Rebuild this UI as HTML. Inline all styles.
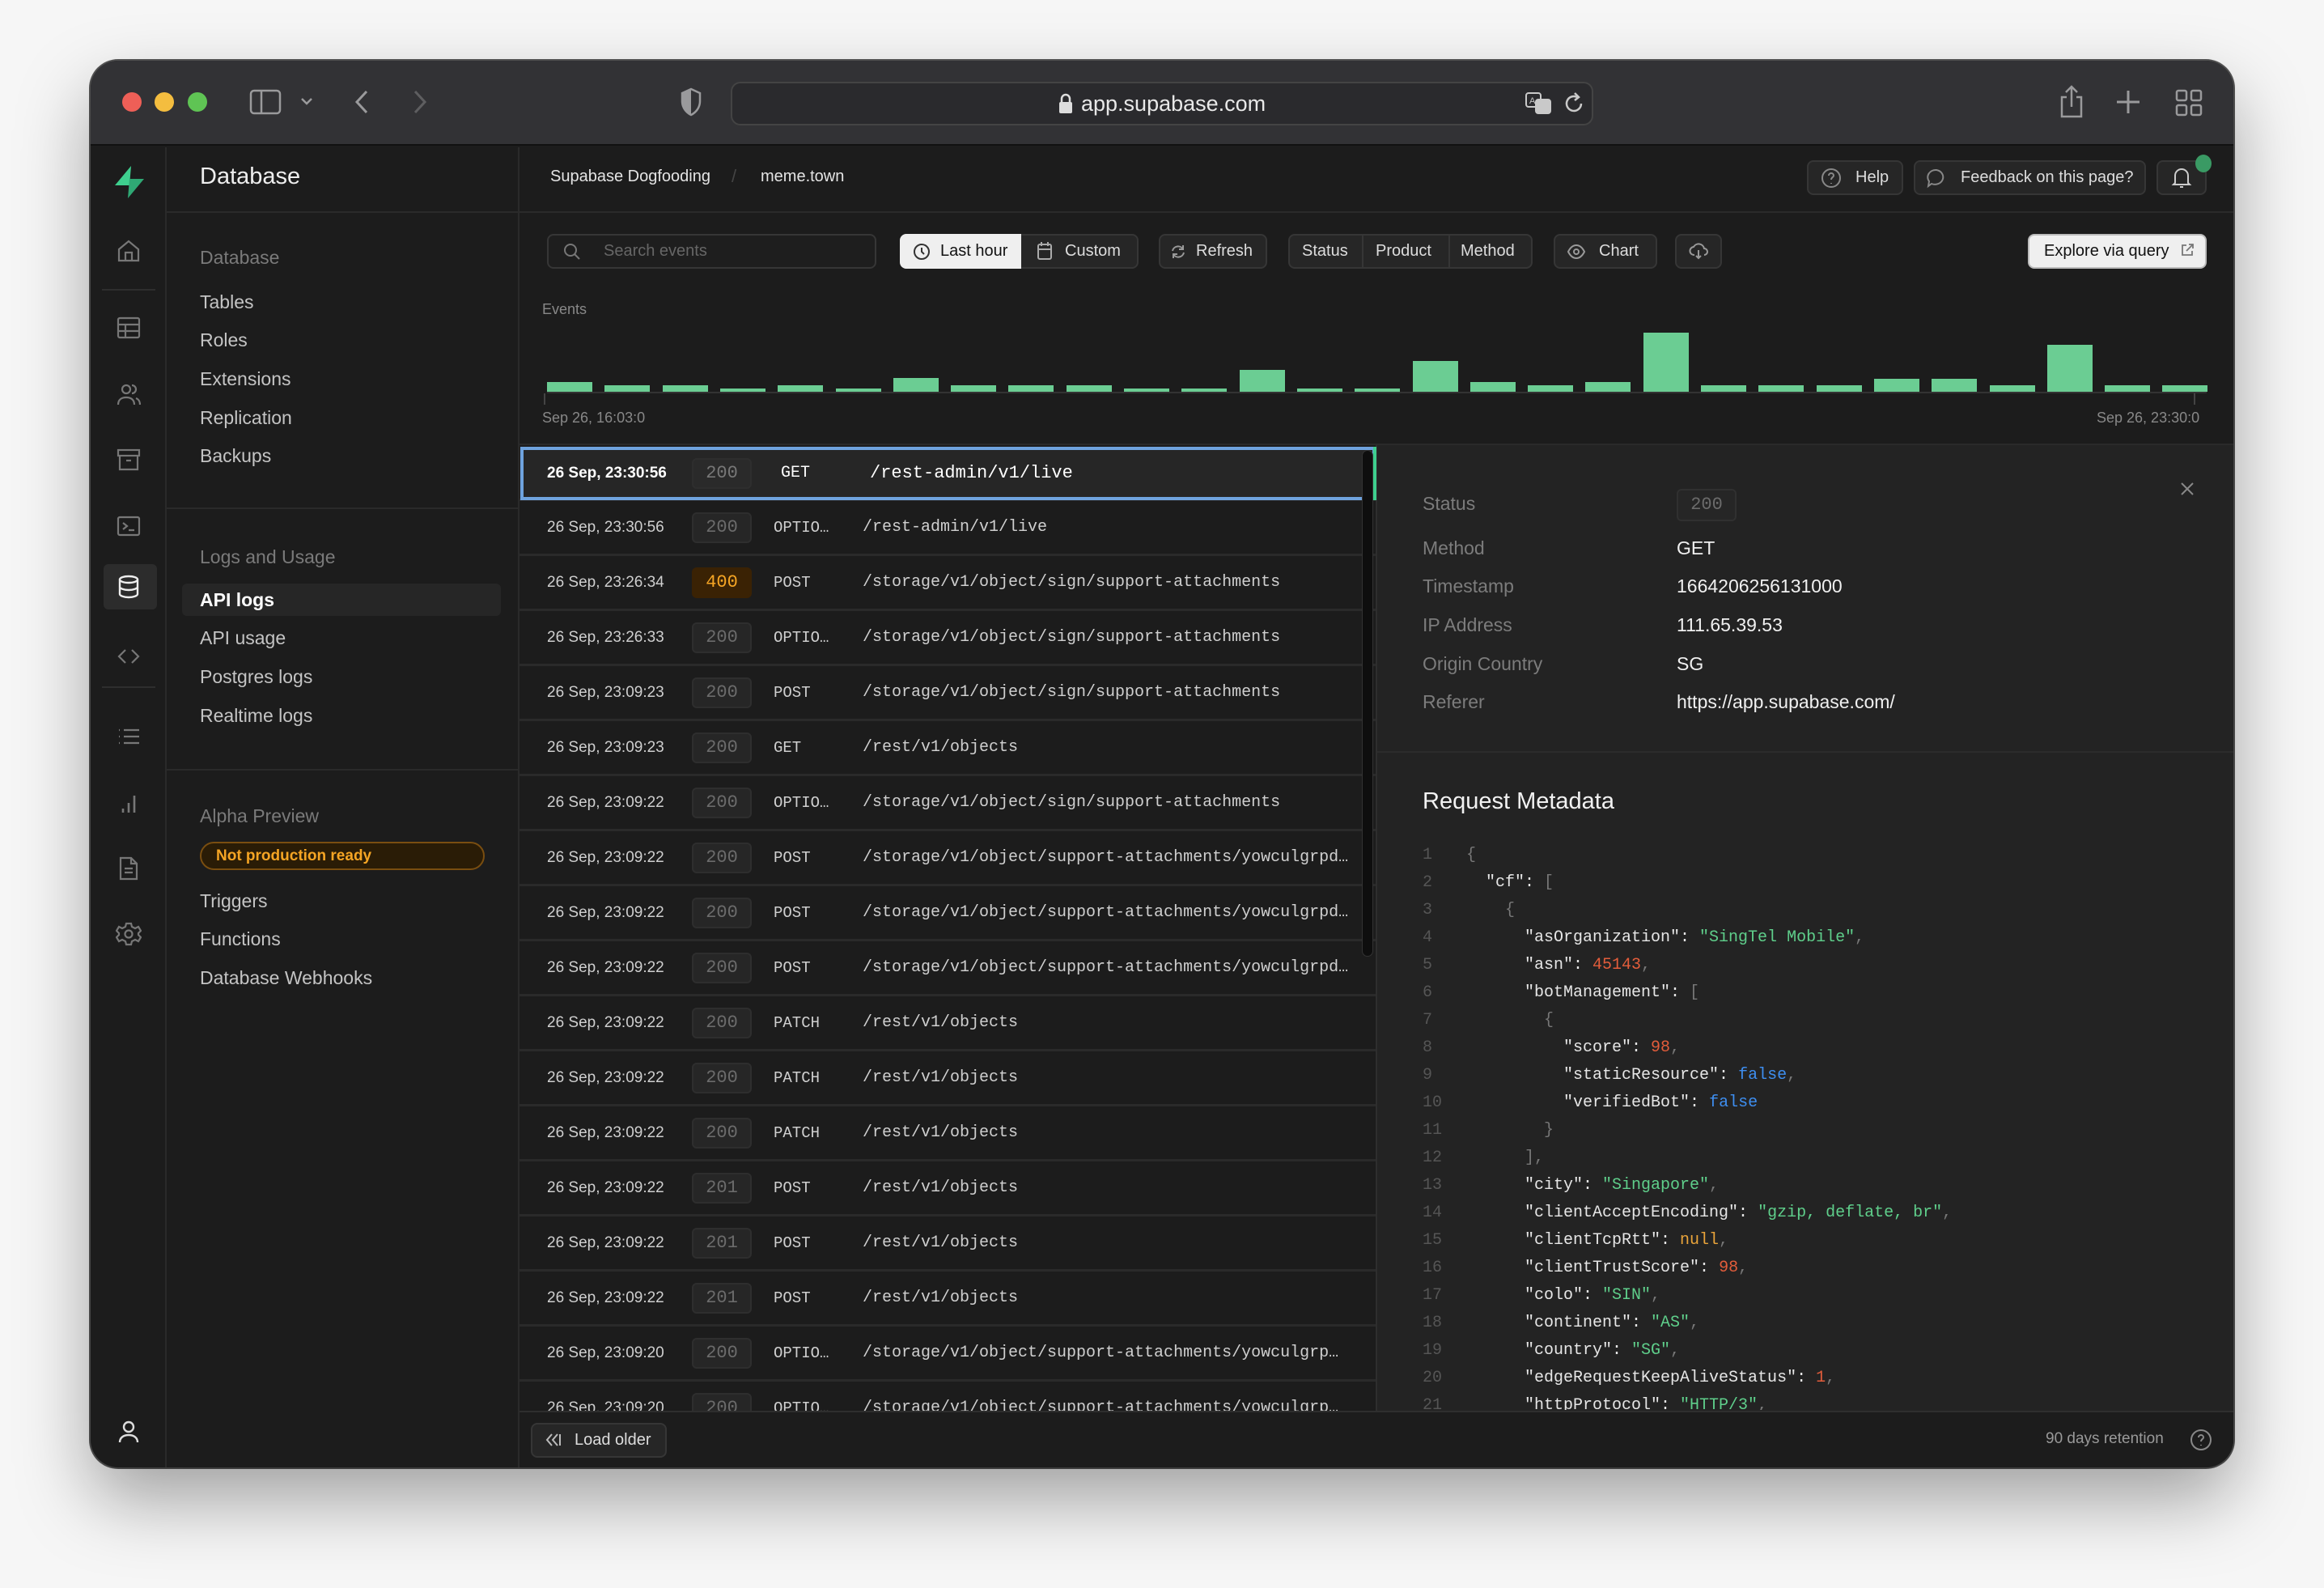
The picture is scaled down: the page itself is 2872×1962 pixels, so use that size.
<!DOCTYPE html>
<html><head><meta charset="utf-8"><style>
*{margin:0;padding:0;box-sizing:border-box}
body{width:2872px;height:1962px;background:#f6f6f6;position:relative;overflow:hidden;font-family:"Liberation Sans",sans-serif}
.a{position:absolute;white-space:nowrap}
.win{position:absolute;left:112px;top:75px;width:2648px;height:1738px;border-radius:34px;background:#1c1c1c;overflow:hidden;box-shadow:0 40px 90px rgba(0,0,0,.35),0 0 0 2px #555}
.mono{font-family:"Liberation Mono",monospace}
.btn{position:absolute;height:43px;border:2px solid #363636;background:#262626;border-radius:8px;color:#ddd;font-size:20px;line-height:39px}
.side{font-size:23px;color:#c4c4c4}
.lab{font-size:23px;color:#7a7a7a}
.row{position:absolute;left:641px;width:1059px;height:68px;border-bottom:3px solid #2a2a2a}
.ts{position:absolute;left:35px;top:0;line-height:66px;font-size:19px;color:#cfcfcf}
.st{position:absolute;left:214px;top:14px;width:74px;height:38px;background:#262626;border:2px solid #2e2e2e;border-radius:6px;color:#6b6b6b;font-family:"Liberation Mono",monospace;font-size:22px;line-height:34px;text-align:center}
.me{position:absolute;left:315px;top:0;line-height:66px;font-family:"Liberation Mono",monospace;font-size:19px;color:#cfcfcf}
.pa{position:absolute;left:425px;top:0;line-height:66px;font-family:"Liberation Mono",monospace;font-size:20px;color:#cfcfcf}
.dl{position:absolute;left:1758px;font-size:23px;color:#7c7c7c}
.dv{position:absolute;left:2072px;font-size:23px;color:#f0f0f0}
.cl{position:absolute;left:1758px;height:34px;line-height:34px;font-family:"Liberation Mono",monospace;font-size:20px;color:#e6e6e6;white-space:pre}
.cl i{font-style:normal;color:#555;display:inline-block;width:54px}
.s{color:#5fcf8b}.n{color:#e35d3b}.b{color:#3e8ef0}.u{color:#e8a33a}.p{color:#777}
svg{position:absolute}
</style></head><body>
<div class="win">
<div class="a" style="left:0;top:0;width:2648px;height:105px;background:#323235;border-bottom:2px solid #111"></div>
<!-- detail panel bg -->
<div class="a" style="left:1588px;top:475px;width:1060px;height:1194px;background:#232323;border-left:2px solid #2e2e2e"></div>
<!-- footer -->
<div class="a" style="left:529px;top:1668px;width:2119px;height:70px;background:#1c1c1c;border-top:2px solid #2e2e2e"></div>
</div>
<div class="a" style="left:151px;top:114px;width:24px;height:24px;border-radius:50%;background:#ee5f57"></div>
<div class="a" style="left:191px;top:114px;width:24px;height:24px;border-radius:50%;background:#f4bd3f"></div>
<div class="a" style="left:232px;top:114px;width:24px;height:24px;border-radius:50%;background:#5fc454"></div>
<svg style="left:308px;top:110px" width="40" height="32" viewBox="0 0 40 32" fill="none" stroke="#9a9a9c" stroke-width="2.5"><rect x="2" y="2" width="36" height="28" rx="4"/><line x1="15" y1="2" x2="15" y2="30"/></svg>
<svg style="left:370px;top:118px" width="18" height="14" viewBox="0 0 18 14" fill="none" stroke="#9a9a9c" stroke-width="2.5"><path d="M3 4l6 6 6-6"/></svg>
<svg style="left:436px;top:110px" width="22" height="32" viewBox="0 0 22 32" fill="none" stroke="#9a9a9c" stroke-width="3"><path d="M17 3L5 16l12 13"/></svg>
<svg style="left:508px;top:110px" width="22" height="32" viewBox="0 0 22 32" fill="none" stroke="#5e5e60" stroke-width="3"><path d="M5 3l12 13L5 29"/></svg>
<svg style="left:840px;top:108px" width="28" height="36" viewBox="0 0 28 36"><path d="M14 2L3 7v10c0 8 5 14 11 17 6-3 11-9 11-17V7z" fill="none" stroke="#9a9a9c" stroke-width="2.5"/><path d="M14 2L3 7v10c0 8 5 14 11 17z" fill="#9a9a9c"/></svg>
<div class="a" style="left:903px;top:101px;width:1066px;height:54px;border-radius:12px;background:#2a2a2d;border:2px solid #444"></div>
<svg style="left:1308px;top:115px" width="18" height="26" viewBox="0 0 18 26"><path d="M4 11V7a5 5 0 0110 0v4" fill="none" stroke="#ddd" stroke-width="2.5"/><rect x="1" y="11" width="16" height="14" rx="2" fill="#ddd"/></svg>
<div class="a" style="left:1336px;top:110px;font-size:27px;color:#e8e8e8;line-height:36px">app.supabase.com</div>
<svg style="left:1884px;top:113px" width="36" height="30" viewBox="0 0 36 30" fill="none" stroke="#c9c9c9" stroke-width="2"><rect x="2" y="2" width="18" height="17" rx="3"/><rect x="14" y="10" width="18" height="17" rx="3" fill="#c9c9c9"/><text x="6" y="15" font-size="11" fill="#c9c9c9" stroke="none" font-family="Liberation Sans">A</text></svg>
<svg style="left:1932px;top:112px" width="28" height="32" viewBox="0 0 28 32" fill="none" stroke="#c9c9c9" stroke-width="2.5"><path d="M22 16a9 9 0 11-4-7.5"/><path d="M14 3l5 5-5 4"/></svg>
<svg style="left:2544px;top:104px" width="32" height="42" viewBox="0 0 32 42" fill="none" stroke="#9a9a9c" stroke-width="2.5"><path d="M10 16H4v24h24V16h-6"/><path d="M16 28V3M9 10l7-7 7 7"/></svg>
<svg style="left:2614px;top:110px" width="32" height="32" viewBox="0 0 32 32" stroke="#9a9a9c" stroke-width="3"><path d="M16 2v28M2 16h28"/></svg>
<svg style="left:2688px;top:110px" width="34" height="34" viewBox="0 0 34 34" fill="none" stroke="#9a9a9c" stroke-width="2.5"><rect x="2" y="2" width="12" height="12" rx="2"/><rect x="20" y="2" width="12" height="12" rx="2"/><rect x="2" y="20" width="12" height="12" rx="2"/><rect x="20" y="20" width="12" height="12" rx="2"/></svg>

<div class="a" style="left:204px;top:182px;width:2px;height:1631px;background:#2a2a2a"></div>
<div class="a" style="left:640px;top:182px;width:2px;height:1631px;background:#2a2a2a"></div>
<div class="a" style="left:206px;top:261px;width:2554px;height:2px;background:#2a2a2a"></div>
<svg style="left:138px;top:203px" width="44" height="44" viewBox="0 0 44 44"><path d="M24 2L4 26h18z" fill="#3ecf8e"/><path d="M20 42l20-24H22z" fill="#2fa874"/></svg>
<svg style="left:144px;top:295px" width="30" height="30" viewBox="0 0 30 30" fill="none" stroke="#777" stroke-width="2.2"><path d="M3 13L15 3l12 10v14H3z"/><path d="M11 27V17h8v10"/></svg>
<div class="a" style="left:126px;top:357px;width:66px;height:2px;background:#2e2e2e"></div>
<svg style="left:144px;top:390px" width="30" height="30" viewBox="0 0 30 30" fill="none" stroke="#777" stroke-width="2.2"><rect x="2" y="3" width="26" height="24" rx="2"/><path d="M2 11h26M2 19h26M11 11v16"/></svg>
<svg style="left:144px;top:472px" width="30" height="30" viewBox="0 0 30 30" fill="none" stroke="#777" stroke-width="2.2"><circle cx="12" cy="9" r="5"/><path d="M2 28c0-6 4-9 10-9s10 3 10 9"/><path d="M19 4a5 5 0 010 10M24 20c3 1 5 4 5 8"/></svg>
<svg style="left:144px;top:553px" width="30" height="30" viewBox="0 0 30 30" fill="none" stroke="#777" stroke-width="2.2"><rect x="2" y="3" width="26" height="7"/><path d="M4 10v17h22V10M12 16h6"/></svg>
<svg style="left:144px;top:635px" width="30" height="30" viewBox="0 0 30 30" fill="none" stroke="#777" stroke-width="2.2"><rect x="2" y="4" width="26" height="22" rx="2"/><path d="M8 11l5 4-5 4M15 20h7"/></svg>
<div class="a" style="left:128px;top:697px;width:66px;height:56px;border-radius:6px;background:#2c2c2c"></div>
<svg style="left:144px;top:710px" width="30" height="30" viewBox="0 0 30 30" fill="none" stroke="#eee" stroke-width="2.4"><ellipse cx="15" cy="6" rx="11" ry="4"/><path d="M4 6v18c0 2 5 4 11 4s11-2 11-4V6M4 15c0 2 5 4 11 4s11-2 11-4"/></svg>
<svg style="left:144px;top:796px" width="30" height="30" viewBox="0 0 30 30" fill="none" stroke="#777" stroke-width="2.2"><path d="M11 7l-8 8 8 8M19 7l8 8-8 8"/></svg>
<div class="a" style="left:126px;top:848px;width:66px;height:2px;background:#2e2e2e"></div>
<svg style="left:144px;top:895px" width="30" height="30" viewBox="0 0 30 30" fill="none" stroke="#777" stroke-width="2.2"><path d="M9 7h19M9 15h19M9 23h19M3 7h1M3 15h1M3 23h1"/></svg>
<svg style="left:144px;top:978px" width="30" height="30" viewBox="0 0 30 30" fill="none" stroke="#777" stroke-width="2.6"><path d="M8 26v-5M15 26V14M22 26V5"/></svg>
<svg style="left:144px;top:1058px" width="30" height="30" viewBox="0 0 30 30" fill="none" stroke="#777" stroke-width="2.2"><path d="M5 2h13l7 7v19H5z"/><path d="M18 2v7h7M10 15h10M10 20h10"/></svg>
<svg style="left:143px;top:1138px" width="32" height="32" viewBox="0 0 32 32" fill="none" stroke="#777" stroke-width="2.2"><circle cx="16" cy="16" r="4.5"/><path d="M13 3h6l1 4 4 2 4-2 3 5-3 3v2l3 3-3 5-4-2-4 2-1 4h-6l-1-4-4-2-4 2-3-5 3-3v-2L1 12l3-5 4 2 4-2z"/></svg>
<svg style="left:144px;top:1754px" width="30" height="30" viewBox="0 0 30 30" fill="none" stroke="#ddd" stroke-width="2.4"><circle cx="15" cy="9" r="6"/><path d="M4 28c0-6 5-9 11-9s11 3 11 9"/></svg>

<div class="a" style="left:247px;top:202px;font-size:29px;color:#eee">Database</div>
<div class="a lab" style="left:247px;top:305px">Database</div>
<div class="a side" style="left:247px;top:360px">Tables</div>
<div class="a side" style="left:247px;top:407px">Roles</div>
<div class="a side" style="left:247px;top:455px">Extensions</div>
<div class="a side" style="left:247px;top:503px">Replication</div>
<div class="a side" style="left:247px;top:550px">Backups</div>
<div class="a" style="left:206px;top:627px;width:434px;height:2px;background:#2a2a2a"></div>
<div class="a lab" style="left:247px;top:675px">Logs and Usage</div>
<div class="a" style="left:225px;top:721px;width:394px;height:40px;border-radius:6px;background:#262626"></div>
<div class="a side" style="left:247px;top:728px;color:#fff;font-weight:bold">API logs</div>
<div class="a side" style="left:247px;top:775px">API usage</div>
<div class="a side" style="left:247px;top:823px">Postgres logs</div>
<div class="a side" style="left:247px;top:871px">Realtime logs</div>
<div class="a" style="left:206px;top:950px;width:434px;height:2px;background:#2a2a2a"></div>
<div class="a lab" style="left:247px;top:995px">Alpha Preview</div>
<div class="a" style="left:247px;top:1040px;width:352px;height:35px;border-radius:18px;background:#2a1c06;border:2px solid #7a4e10;color:#f5a524;font-size:19px;font-weight:bold;line-height:31px;padding-left:18px">Not production ready</div>
<div class="a side" style="left:247px;top:1100px">Triggers</div>
<div class="a side" style="left:247px;top:1147px">Functions</div>
<div class="a side" style="left:247px;top:1195px">Database Webhooks</div>

<div class="a" style="left:680px;top:207px;font-size:20px;color:#e4e4e4">Supabase Dogfooding</div>
<div class="a" style="left:904px;top:205px;font-size:22px;color:#444">/</div>
<div class="a" style="left:940px;top:207px;font-size:20px;color:#e4e4e4">meme.town</div>
<div class="btn" style="left:2233px;top:198px;width:119px;padding-left:58px">Help</div>
<svg style="left:2250px;top:207px" width="26" height="26" viewBox="0 0 26 26" fill="none" stroke="#888" stroke-width="2"><circle cx="13" cy="13" r="11"/><path d="M10 10a3 3 0 116 0c0 2-3 2-3 5M13 19v1"/></svg>
<div class="btn" style="left:2365px;top:198px;width:287px;padding-left:56px">Feedback on this page?</div>
<svg style="left:2380px;top:207px" width="26" height="26" viewBox="0 0 26 26" fill="none" stroke="#888" stroke-width="2"><path d="M13 3a10 9 0 11-6 17l-4 3 1-6A10 9 0 0113 3z"/></svg>
<div class="btn" style="left:2665px;top:198px;width:62px"></div>
<svg style="left:2683px;top:206px" width="26" height="28" viewBox="0 0 26 28" fill="none" stroke="#ccc" stroke-width="2"><path d="M5 20V11a8 8 0 0116 0v9l2 2H3zM11 25h4"/></svg>
<div class="a" style="left:2713px;top:191px;width:20px;height:22px;border-radius:50%;background:#3a9a64"></div>

<div class="a" style="left:676px;top:289px;width:407px;height:43px;border:2px solid #363636;border-radius:8px;background:#1e1e1e"></div>
<svg style="left:696px;top:300px" width="22" height="22" viewBox="0 0 22 22" fill="none" stroke="#777" stroke-width="2"><circle cx="9" cy="9" r="7"/><path d="M14 14l6 6"/></svg>
<div class="a" style="left:746px;top:299px;font-size:20px;color:#666">Search events</div>
<div class="a" style="left:1112px;top:289px;width:295px;height:43px;border:2px solid #363636;border-radius:8px;background:#262626"></div>
<div class="a" style="left:1112px;top:289px;width:150px;height:43px;border-radius:8px 0 0 8px;background:#efefef"></div>
<svg style="left:1128px;top:300px" width="22" height="22" viewBox="0 0 22 22" fill="none" stroke="#333" stroke-width="2"><circle cx="11" cy="11" r="9"/><path d="M11 6v5l3 3"/></svg>
<div class="a" style="left:1162px;top:299px;font-size:20px;color:#111">Last hour</div>
<svg style="left:1280px;top:298px" width="22" height="24" viewBox="0 0 22 24" fill="none" stroke="#aaa" stroke-width="2"><rect x="3" y="4" width="16" height="18" rx="2"/><path d="M3 10h16M7 1v5M15 1v5"/></svg>
<div class="a" style="left:1316px;top:299px;font-size:20px;color:#ddd">Custom</div>
<div class="btn" style="left:1432px;top:289px;width:134px;padding-left:44px">Refresh</div>
<svg style="left:1446px;top:300px" width="20" height="22" viewBox="0 0 20 22" fill="none" stroke="#999" stroke-width="2"><path d="M16 8a7 7 0 00-13 2M4 14a7 7 0 0013-2M16 3v5h-5M4 19v-5h5"/></svg>
<div class="btn" style="left:1592px;top:289px;width:302px"></div>
<div class="a" style="left:1683px;top:291px;width:2px;height:39px;background:#363636"></div>
<div class="a" style="left:1790px;top:291px;width:2px;height:39px;background:#363636"></div>
<div class="a" style="left:1609px;top:299px;font-size:20px;color:#ddd">Status</div>
<div class="a" style="left:1700px;top:299px;font-size:20px;color:#ddd">Product</div>
<div class="a" style="left:1805px;top:299px;font-size:20px;color:#ddd">Method</div>
<div class="btn" style="left:1920px;top:289px;width:128px;padding-left:54px">Chart</div>
<svg style="left:1936px;top:300px" width="24" height="22" viewBox="0 0 24 22" fill="none" stroke="#999" stroke-width="2"><path d="M2 11C5 5 9 3 12 3s7 2 10 8c-3 6-7 8-10 8S5 17 2 11z"/><circle cx="12" cy="11" r="3"/></svg>
<div class="btn" style="left:2070px;top:289px;width:58px"></div>
<svg style="left:2087px;top:298px" width="24" height="24" viewBox="0 0 24 24" fill="none" stroke="#999" stroke-width="2"><path d="M7 17a5 5 0 01-1-10 7 7 0 0113 2 4 4 0 010 8M12 11v10M9 18l3 3 3-3"/></svg>
<div class="a" style="left:2506px;top:289px;width:221px;height:43px;border-radius:8px;background:#efefef;border:2px solid #bbb;font-size:20px;color:#111;line-height:39px;padding-left:18px">Explore via query</div>
<svg style="left:2694px;top:300px" width="18" height="18" viewBox="0 0 18 18" fill="none" stroke="#777" stroke-width="1.8"><path d="M8 3H3v12h12v-5M11 2h5v5M16 2l-8 8"/></svg>

<div class="a" style="left:670px;top:372px;font-size:18px;color:#888">Events</div>
<div class="a" style="left:676px;top:484px;width:2051px;height:2px;background:#333"></div>
<div id="bars"></div>
<div class="a" style="left:672px;top:486px;width:2px;height:14px;background:#444"></div>
<div class="a" style="left:2711px;top:486px;width:2px;height:14px;background:#444"></div>
<div class="a" style="left:670px;top:506px;font-size:18px;color:#888">Sep 26, 16:03:0</div>
<div class="a" style="left:2591px;top:506px;font-size:18px;color:#888">Sep 26, 23:30:0</div>
<div class="a" style="left:641px;top:548px;width:2119px;height:2px;background:#2a2a2a"></div>

<div id="rows"></div>
<div class="a" style="left:643px;top:552px;width:1057px;height:66px;border:4px solid #6fa3de;background:#262626"></div>
<div class="a" style="left:676px;top:552px;line-height:66px;font-size:19px;color:#fff;font-weight:bold">26 Sep, 23:30:56</div>
<div class="st" style="left:855px;top:566px;color:#777;background:#2a2a2a">200</div>
<div class="a mono" style="left:965px;top:552px;line-height:66px;font-size:20px;color:#fff">GET</div>
<div class="a mono" style="left:1075px;top:552px;line-height:66px;font-size:22px;color:#fff">/rest-admin/v1/live</div>
<div class="a" style="left:1683px;top:556px;width:14px;height:626px;background:#0e0e0e;border-radius:7px;border:1px solid #333"></div>
<div class="a" style="left:1697px;top:552px;width:4px;height:66px;background:#3ecf8e"></div>

<div class="dl" style="top:609px">Status</div>
<div class="a" style="left:2072px;top:604px;width:74px;height:40px;background:#262626;border:2px solid #303030;border-radius:6px;color:#6b6b6b;font-family:'Liberation Mono',monospace;font-size:22px;line-height:36px;text-align:center">200</div>
<div class="dl" style="top:664px">Method</div><div class="dv" style="top:664px">GET</div>
<div class="dl" style="top:711px">Timestamp</div><div class="dv" style="top:711px">1664206256131000</div>
<div class="dl" style="top:759px">IP Address</div><div class="dv" style="top:759px">111.65.39.53</div>
<div class="dl" style="top:807px">Origin Country</div><div class="dv" style="top:807px">SG</div>
<div class="dl" style="top:854px">Referer</div><div class="dv" style="top:854px">https://app.supabase.com/</div>
<svg style="left:2694px;top:595px" width="18" height="18" viewBox="0 0 18 18" stroke="#888" stroke-width="2"><path d="M2 2l14 14M16 2L2 16"/></svg>
<div class="a" style="left:1702px;top:928px;width:1058px;height:2px;background:#2c2c2c"></div>
<div class="a" style="left:1758px;top:974px;font-size:29px;color:#f2f2f2">Request Metadata</div>
<div class="a" style="left:1702px;top:1040px;width:1058px;height:702px;overflow:hidden">
<div style="position:relative;left:-1702px;top:-1040px">
<div class="cl" style="top:1040px"><i>1</i><span class="p">{</span></div>
<div class="cl" style="top:1074px"><i>2</i>  "cf": <span class="p">[</span></div>
<div class="cl" style="top:1108px"><i>3</i>    <span class="p">{</span></div>
<div class="cl" style="top:1142px"><i>4</i>      "asOrganization": <span class="s">"SingTel Mobile"</span><span class="p">,</span></div>
<div class="cl" style="top:1176px"><i>5</i>      "asn": <span class="n">45143</span><span class="p">,</span></div>
<div class="cl" style="top:1210px"><i>6</i>      "botManagement": <span class="p">[</span></div>
<div class="cl" style="top:1244px"><i>7</i>        <span class="p">{</span></div>
<div class="cl" style="top:1278px"><i>8</i>          "score": <span class="n">98</span><span class="p">,</span></div>
<div class="cl" style="top:1312px"><i>9</i>          "staticResource": <span class="b">false</span><span class="p">,</span></div>
<div class="cl" style="top:1346px"><i>10</i>          "verifiedBot": <span class="b">false</span></div>
<div class="cl" style="top:1380px"><i>11</i>        <span class="p">}</span></div>
<div class="cl" style="top:1414px"><i>12</i>      <span class="p">],</span></div>
<div class="cl" style="top:1448px"><i>13</i>      "city": <span class="s">"Singapore"</span><span class="p">,</span></div>
<div class="cl" style="top:1482px"><i>14</i>      "clientAcceptEncoding": <span class="s">"gzip, deflate, br"</span><span class="p">,</span></div>
<div class="cl" style="top:1516px"><i>15</i>      "clientTcpRtt": <span class="u">null</span><span class="p">,</span></div>
<div class="cl" style="top:1550px"><i>16</i>      "clientTrustScore": <span class="n">98</span><span class="p">,</span></div>
<div class="cl" style="top:1584px"><i>17</i>      "colo": <span class="s">"SIN"</span><span class="p">,</span></div>
<div class="cl" style="top:1618px"><i>18</i>      "continent": <span class="s">"AS"</span><span class="p">,</span></div>
<div class="cl" style="top:1652px"><i>19</i>      "country": <span class="s">"SG"</span><span class="p">,</span></div>
<div class="cl" style="top:1686px"><i>20</i>      "edgeRequestKeepAliveStatus": <span class="n">1</span><span class="p">,</span></div>
<div class="cl" style="top:1720px"><i>21</i>      "httpProtocol": <span class="s">"HTTP/3"</span><span class="p">,</span></div>
</div></div>

<div class="btn" style="left:656px;top:1758px;width:168px;padding-left:52px">Load older</div>
<svg style="left:672px;top:1769px" width="22" height="20" viewBox="0 0 22 20" fill="none" stroke="#bbb" stroke-width="2"><path d="M10 3L4 10l6 7M17 3l-6 7 6 7M20 3v14"/></svg>
<div class="a" style="left:2528px;top:1767px;font-size:19px;color:#999">90 days retention</div>
<svg style="left:2706px;top:1765px" width="28" height="28" viewBox="0 0 28 28" fill="none" stroke="#888" stroke-width="2"><circle cx="14" cy="14" r="12"/><path d="M11 11a3 3 0 116 0c0 2-3 2-3 5M14 20v1"/></svg>

<script>
var H=[12,8,8,4,8,4,17,8,8,8,4,4,27,4,4,38,12,8,12,73,8,8,8,16,16,8,58,8,8];
var s='';for(var i=0;i<H.length;i++){s+='<div class="a" style="left:'+(676+i*71.3)+'px;top:'+(484-H[i])+'px;width:56px;height:'+H[i]+'px;background:#6bcd93"></div>';}
document.getElementById('bars').outerHTML=s;
var R=[["23:30:56","200","GET","/rest-admin/v1/live"],["23:30:56","200","OPTIO…","/rest-admin/v1/live"],["23:26:34","400","POST","/storage/v1/object/sign/support-attachments"],["23:26:33","200","OPTIO…","/storage/v1/object/sign/support-attachments"],["23:09:23","200","POST","/storage/v1/object/sign/support-attachments"],["23:09:23","200","GET","/rest/v1/objects"],["23:09:22","200","OPTIO…","/storage/v1/object/sign/support-attachments"],["23:09:22","200","POST","/storage/v1/object/support-attachments/yowculgrpd…"],["23:09:22","200","POST","/storage/v1/object/support-attachments/yowculgrpd…"],["23:09:22","200","POST","/storage/v1/object/support-attachments/yowculgrpd…"],["23:09:22","200","PATCH","/rest/v1/objects"],["23:09:22","200","PATCH","/rest/v1/objects"],["23:09:22","200","PATCH","/rest/v1/objects"],["23:09:22","201","POST","/rest/v1/objects"],["23:09:22","201","POST","/rest/v1/objects"],["23:09:22","201","POST","/rest/v1/objects"],["23:09:20","200","OPTIO…","/storage/v1/object/support-attachments/yowculgrp…"],["23:09:20","200","OPTIO…","/storage/v1/object/support-attachments/yowculgrp…"]];
var t='<div class="a" style="left:641px;top:550px;width:1059px;height:1193px;overflow:hidden"><div style="position:relative;left:-641px;top:-550px">';
for(var j=0;j<R.length;j++){var r=R[j];var st=r[1]=="400"?'style="background:#3a2204;border-color:#3a2204;color:#f5a524"':'';
t+='<div class="row" style="top:'+(551+j*68)+'px"><div class="ts">26 Sep, '+r[0]+'</div><div class="st" '+st+'>'+r[1]+'</div><div class="me">'+r[2]+'</div><div class="pa">'+r[3]+'</div></div>';}
t+='</div></div>';
document.getElementById('rows').outerHTML=t;
</script>
</body></html>
